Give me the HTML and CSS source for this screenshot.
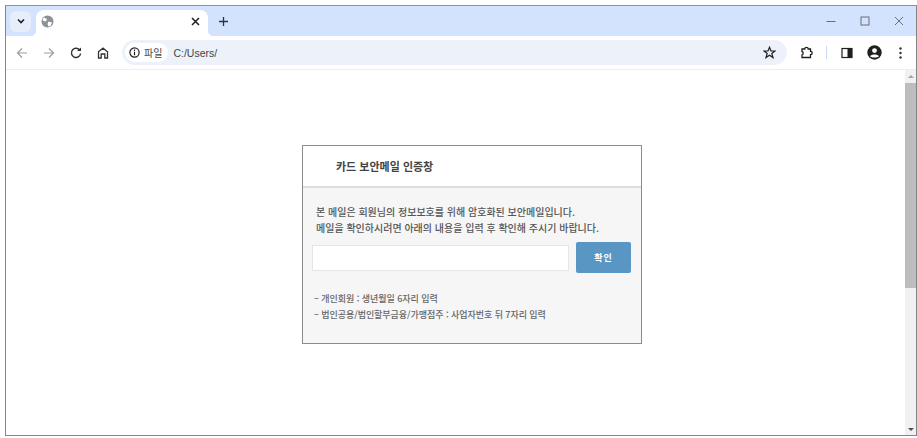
FILE: index.html
```html
<!DOCTYPE html>
<html lang="ko">
<head>
    <meta charset="UTF-8">
    <title>카드 보안메일 인증창</title>
    <link rel="stylesheet" href="styles.css">
</head>
<body>
    <div class="window">
        <div class="tabbar">
            <div class="tab-search">
                <svg width="10" height="10" viewBox="0 0 10 10"><path d="M2 3.500 5 6.500 8 3.500" fill="none" stroke="#1f1f1f" stroke-width="1.600"/></svg>
            </div>
            <div class="tab">
                <svg class="globe" width="13" height="13" viewBox="0 0 13 13"><circle cx="6.500" cy="6.500" r="6" fill="#8d9196"/><path d="M3 2.500 6 4 5 6.500 2.500 6 1.500 4.500ZM7.500 6.500 11 7.500 9.500 11 7.500 11.500 6.500 9Z" fill="#fff"/></svg>
                <svg class="tab-close" width="9" height="9" viewBox="0 0 9 9"><path d="M1 1 8 8M8 1 1 8" stroke="#1f1f1f" stroke-width="1.500"/></svg>
            </div>
            <svg class="new-tab" width="11" height="11" viewBox="0 0 11 11"><path d="M5.500 1V10M1 5.500H10" stroke="#333" stroke-width="1.300"/></svg>
            <div class="win-controls">
                <svg width="10" height="10" viewBox="0 0 10 10"><path d="M0.500 5.500H9.500" stroke="#6a6f78" stroke-width="1"/></svg>
                <svg width="10" height="10" viewBox="0 0 10 10"><rect x="1" y="1" width="8" height="8" fill="none" stroke="#6a6f78"/></svg>
                <svg width="10" height="10" viewBox="0 0 10 10"><path d="M1 1 9 9M9 1 1 9" stroke="#6a6f78"/></svg>
            </div>
        </div>

        <div class="toolbar">
            <svg class="nav-icon" width="12" height="12" viewBox="0 0 12 12"><path d="M11 6H1.500M6 1.500 1.500 6 6 10.500" fill="none" stroke="#9a9da1" stroke-width="1.200"/></svg>
            <svg class="nav-icon" width="12" height="12" viewBox="0 0 12 12"><path d="M1 6H10.500M6 1.500 10.500 6 6 10.500" fill="none" stroke="#9a9da1" stroke-width="1.200"/></svg>
            <svg class="nav-icon" width="12" height="12" viewBox="0 0 12 12"><path d="M10 3.500A4.600 4.600 0 1 0 10.600 6.500" fill="none" stroke="#333" stroke-width="1.400"/><path d="M7 4H11V0.500Z" fill="#333"/></svg>
            <svg class="nav-icon" width="12" height="12" viewBox="0 0 12 12"><path d="M1.500 11V4.800L6 1.200 10.500 4.800V11H7.800V7H4.200V11Z" fill="none" stroke="#333" stroke-width="1.300"/></svg>
            <div class="omnibox">
                <div class="chip">
                    <svg width="11" height="11" viewBox="0 0 11 11"><circle cx="5.500" cy="5.500" r="4.600" fill="none" stroke="#1f1f1f" stroke-width="1.200"/><path d="M5.500 4.800V8.200M5.500 2.600V3.900" stroke="#1f1f1f" stroke-width="1.200"/></svg>
                    <span>파일</span>
                </div>
                <span class="url">C:/Users/</span>
                <svg class="star" width="13" height="13" viewBox="0 0 13 13"><path d="M6.500 1.300 8 5H12L8.800 7.500 10 11.600 6.500 9.200 3 11.600 4.200 7.500 1 5H5Z" fill="none" stroke="#1f1f1f" stroke-width="1.200"/></svg>
            </div>
            <svg class="tool-ext" width="13" height="13" viewBox="0 0 13 13"><path d="M2 3H4.800A1.700 1.700 0 0 1 8.200 3H10.500V5.300A1.700 1.700 0 0 1 10.500 8.700V11.500H2V9C3.500 9 3.500 5.500 2 5.500Z" fill="none" stroke="#1f1f1f" stroke-width="1.300"/></svg>
            <div class="tool-sep"></div>
            <svg class="tool-icon" width="12" height="12" viewBox="0 0 12 12"><rect x="1" y="1.500" width="10" height="9" fill="none" stroke="#1f1f1f" stroke-width="1.200"/><rect x="6.500" y="1.500" width="4.500" height="9" fill="#1f1f1f"/></svg>
            <svg class="tool-icon" width="15" height="15" viewBox="0 0 15 15"><circle cx="7.500" cy="7.500" r="7.200" fill="#1f1f1f"/><circle cx="7.500" cy="5.600" r="2.400" fill="#fff"/><path d="M3 11.200C4.500 8.800 10.500 8.800 12 11.200 10.500 12.900 4.500 12.900 3 11.200Z" fill="#fff"/></svg>
            <svg class="tool-more" width="3" height="12" viewBox="0 0 3 12"><circle cx="1.500" cy="1.500" r="1.200" fill="#333"/><circle cx="1.500" cy="6" r="1.200" fill="#333"/><circle cx="1.500" cy="10.500" r="1.200" fill="#333"/></svg>
        </div>

        <div class="viewport">
            <div class="page">
                <div class="auth-box">
                    <div class="auth-title">카드 보안메일 인증창</div>
                    <div class="auth-body">
                        <p class="auth-desc">본 메일은 회원님의 정보보호를 위해 암호화된 보안메일입니다.<br>메일을 확인하시려면 아래의 내용을 입력 후 확인해 주시기 바랍니다.</p>
                        <div class="auth-form">
                            <input class="auth-input" type="password">
                            <button class="auth-button">확인</button>
                        </div>
                        <ul class="auth-notes">
                            <li>– 개인회원 : 생년월일 6자리 입력</li>
                            <li>– 법인공용/법인할부금융/가맹점주 : 사업자번호 뒤 7자리 입력</li>
                        </ul>
                    </div>
                </div>
            </div>
            <div class="scrollbar">
                <div class="arrow-up"></div>
                <div class="thumb"></div>
                <div class="arrow-down"></div>
            </div>
        </div>
    </div>
</body>
</html>
```

FILE: styles.css
```css
html, body {
    height: 100%;
}
body {
    margin: 0;
    padding: 5px 0 2px 5px;
    box-sizing: border-box;
    background-color: #FFFFFF;
    font-family: "Noto Sans CJK KR", "Noto Sans", sans-serif;
    overflow: hidden;
}
.window {
    display: flex;
    flex-direction: column;
    height: 100%;
    box-sizing: border-box;
    border: 1px solid #858585;
    border-top-color: #8B93A3;
    background-color: #FFFFFF;
}
.tabbar {
    display: flex;
    align-items: center;
    height: 30px;
    flex: none;
    background-color: #D3E3FD;
}
.tab-search {
    display: flex;
    align-items: center;
    justify-content: center;
    width: 21px;
    height: 21px;
    margin: 0 5px 0 4px;
    border-radius: 6px;
    background-color: #E6EEFB;
}
.tab {
    position: relative;
    display: flex;
    align-items: center;
    justify-content: space-between;
    width: 172px;
    height: 26px;
    margin-top: 4px;
    padding: 0 8px 0 5px;
    box-sizing: border-box;
    border-radius: 8px 8px 0 0;
    background-color: #FFFFFF;
}
.tab::before,
.tab::after {
    content: "";
    position: absolute;
    bottom: 0;
    width: 6px;
    height: 6px;
}
.tab::before {
    left: -6px;
    background: radial-gradient(circle at 0 0, #D3E3FD 6px, #FFFFFF 6.500px);
}
.tab::after {
    right: -6px;
    background: radial-gradient(circle at 100% 0, #D3E3FD 6px, #FFFFFF 6.500px);
}
.globe,
.tab-close {
    margin-bottom: 4px;
}
.new-tab {
    margin-left: 10px;
}
.win-controls {
    display: flex;
    align-items: center;
    gap: 24px;
    margin-left: auto;
    margin-right: 12px;
}
.toolbar {
    display: flex;
    align-items: center;
    height: 34px;
    flex: none;
    padding-right: 14.500px;
    box-sizing: border-box;
    border-bottom: 1px solid #EDEEF0;
    background-color: #FFFFFF;
}
.nav-icon {
    margin-left: 15px;
    flex: none;
}
.nav-icon:first-child {
    margin-left: 10px;
}
.omnibox {
    display: flex;
    align-items: center;
    flex: 1;
    height: 25px;
    margin-left: 13px;
    padding: 0 11px 0 3px;
    border-radius: 13px;
    background-color: #EDF2FA;
}
.chip {
    display: flex;
    align-items: center;
    gap: 4px;
    height: 19px;
    padding: 0 6px 0 4px;
    border-radius: 10px;
    background-color: #FFFFFF;
    font-size: 10px;
    color: #444746;
}
.url {
    margin-left: 5px;
    font-family: "Liberation Sans", sans-serif;
    font-size: 10.500px;
    color: #444444;
}
.star {
    margin-left: auto;
}
.tool-ext {
    margin-left: 13px;
    flex: none;
}
.tool-icon {
    margin-left: 14px;
    flex: none;
}
.tool-more {
    margin-left: 17px;
    flex: none;
}
.tool-sep {
    width: 1px;
    height: 13px;
    margin-left: 13px;
    background-color: #C9DAF4;
}
.viewport {
    display: flex;
    flex: 1;
    min-height: 0;
}
.page {
    flex: 1;
    padding-top: 75px;
    padding-left: 296px;
}
.auth-box {
    width: 338px;
    height: 197px;
    border: 1px solid #8C8C8C;
    background-color: #F6F6F6;
}
.auth-title {
    height: 40px;
    padding-left: 33px;
    border-bottom: 2px solid #DDDDDD;
    background-color: #FFFFFF;
    font-size: 11px;
    font-weight: 700;
    line-height: 41px;
    color: #444444;
}
.auth-body {
    padding: 16px 9px 0 9px;
}
.auth-desc {
    margin: 0 0 0 4px;
    font-size: 10px;
    font-weight: 500;
    line-height: 16px;
    color: #555555;
}
.auth-form {
    display: flex;
    gap: 7px;
    margin-top: 9px;
}
.auth-input {
    width: 255px;
    height: 24px;
    padding: 0;
    border: 1px solid #E6E6E6;
    background-color: #FFFFFF;
}
.auth-button {
    width: 55px;
    height: 31px;
    margin-top: -3px;
    border: none;
    border-radius: 2px;
    background-color: #5A96C4;
    font-family: inherit;
    font-size: 9px;
    font-weight: 700;
    letter-spacing: 1px;
    color: #FFFFFF;
}
.auth-notes {
    margin: 18px 0 0 2px;
    padding: 0;
    list-style: none;
    font-size: 9px;
    font-weight: 500;
    letter-spacing: -0.050px;
    line-height: 16px;
    color: #666666;
}
.scrollbar {
    display: flex;
    flex-direction: column;
    align-items: center;
    width: 11px;
    flex: none;
    background-color: #F1F1F1;
}
.arrow-up {
    width: 0;
    height: 0;
    margin: 5px 0;
    border-left: 3px solid transparent;
    border-right: 3px solid transparent;
    border-bottom: 3px solid #A3A3A3;
}
.thumb {
    width: 100%;
    height: 205px;
    background-color: #BDBDBD;
}
.arrow-down {
    width: 0;
    height: 0;
    margin-top: auto;
    margin-bottom: 4px;
    border-left: 3px solid transparent;
    border-right: 3px solid transparent;
    border-top: 3px solid #505050;
}
```
